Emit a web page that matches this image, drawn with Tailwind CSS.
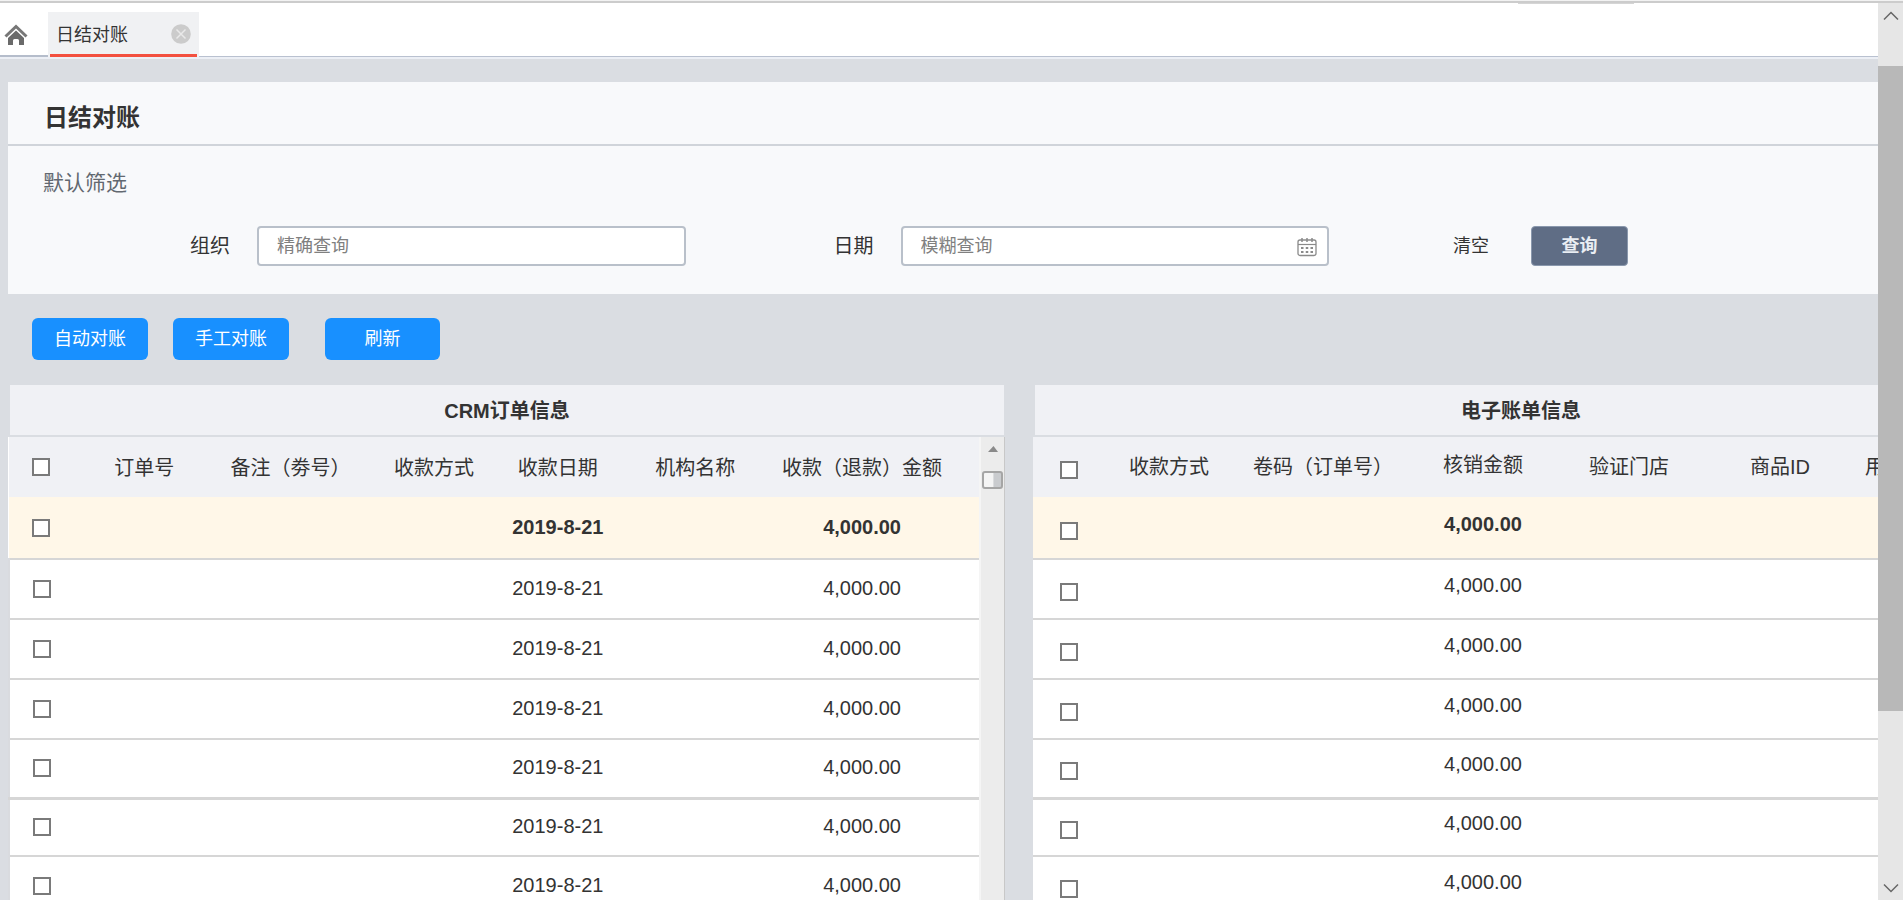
<!DOCTYPE html>
<html lang="zh-CN">
<head>
<meta charset="utf-8">
<title>日结对账</title>
<script src="https://cdn.jsdelivr.net/npm/@tailwindcss/browser@4"></script>
</head>
<body class="flex h-screen flex-col overflow-hidden bg-[#dadde2] font-['Liberation_Sans','Noto_Sans_CJK_SC',sans-serif] text-[#333]">
<div class="relative h-[3px] shrink-0 border-b-2 border-[#cccccc] bg-[#f2f2f2]">
  <span class="absolute top-[3px] left-[1518px] h-px w-[116px] bg-[#d5d5d5]"></span>
</div>
<div class="flex min-h-0 flex-1">
  <main class="min-w-0 flex-1 overflow-hidden">
    <nav class="flex h-14 items-end border-b-2 border-[#eceff5] bg-white">
      <div class="flex h-full w-12 items-center border-b-2 border-[#b5bdcb] pt-3 pl-1">
        <a href="#" aria-label="首页">
          <svg class="h-6 w-6" viewBox="0 0 24 24" fill="none"><path d="M1.500 13.500 12 3.500l10.500 10" stroke="#777" stroke-width="3"/><path d="M4 15 12 7.500l8 7.500v7h-5v-4.500q0-1.500-1.500-1.500h-3Q9 16 9 17.500V22H4z" fill="#6a6a6a"/></svg>
        </a>
      </div>
      <div class="flex h-[45px] w-[151px] items-center justify-between border-x-2 border-[#f0f1f3] bg-[#f0f1f3] pr-1 shadow-[inset_0_-3px_0_#f3503f]">
        <a href="#" class="pl-1.5 text-[18px] leading-6">日结对账</a>
        <button type="button" aria-label="关闭" class="mr-0.5 mb-0.5">
          <svg class="h-5 w-5" viewBox="0 0 20 20"><circle cx="10" cy="10" r="9.800" fill="#cbcbcb"/><path d="m5.500 5.500 9 9m0-9-9 9" stroke="#e9e9e9" stroke-width="1.500"/></svg>
        </button>
      </div>
      <div class="h-full flex-1 border-b border-[#b9c1d0]"></div>
    </nav>

    <section class="mt-[23px] ml-2 bg-[#f8f9fb]">
      <h1 class="border-b-2 border-[#d0d4da] pt-5 pb-[10px] pl-9 text-[24px] leading-8 font-bold">日结对账</h1>
      <h2 class="pt-[21px] pl-[35px] text-[21px] leading-8 text-[#626870]">默认筛选</h2>
      <form class="flex items-center pt-[27px] pr-[250px] pb-7 pl-[182px]">
        <label for="org" class="mr-[27px] text-[20px] leading-6">组织</label>
        <div class="min-w-0 flex-1">
          <input id="org" type="text" placeholder="精确查询" class="block h-10 w-full rounded border-2 border-[#b9c0ca] bg-white px-[18px] text-[18px] leading-6 placeholder:text-[#808080]">
        </div>
        <label for="date" class="mr-[27px] ml-[148px] text-[20px] leading-6">日期</label>
        <div class="relative min-w-0 flex-1">
          <input id="date" type="text" placeholder="模糊查询" class="block h-10 w-full rounded border-2 border-[#b9c0ca] bg-white px-[18px] text-[18px] leading-6 placeholder:text-[#808080]">
          <svg class="absolute top-[11px] right-3 h-5 w-5" viewBox="0 0 20 20" fill="none" stroke="#8a8a8a"><rect x="1" y="3" width="18" height="15.500" rx="2" stroke-width="1.300"/><path d="M1 7.500h18" stroke-width="1.200"/><path d="M5 1v4M10 1v4M15 1v4" stroke-width="1.500"/><path d="M4 11h12M4 15h12" stroke-width="2" stroke-dasharray="2.500 2.250"/></svg>
        </div>
        <button type="reset" class="ml-[124px] text-[18px] leading-6">清空</button>
        <button type="submit" class="ml-[42px] h-10 w-[97px] rounded border border-[#8a98ad] bg-[#5f6d85] text-[18px] leading-6 font-bold text-[#e9edf3]">查询</button>
      </form>
    </section>

    <div class="flex pt-6 pb-[25px] pl-8 text-[18px] leading-6 text-white">
      <button type="button" class="h-[42px] w-[116px] rounded-md bg-[#1890ff]">自动对账</button>
      <button type="button" class="ml-[25px] h-[42px] w-[116px] rounded-md bg-[#1890ff]">手工对账</button>
      <button type="button" class="ml-9 h-[42px] w-[115px] rounded-md bg-[#1890ff]">刷新</button>
    </div>

    <div class="flex pl-2 text-[20px] leading-6">
      <section class="w-[997px] shrink">
        <h3 class="mr-px ml-0.5 h-[50px] bg-[#f0f1f5] pt-[14px] text-center font-bold">CRM订单信息</h3>
        <div class="flex pt-0.5">
          <table class="min-w-0 flex-1 table-fixed border-collapse bg-white text-center whitespace-nowrap">
            <colgroup><col class="w-[65px]"><col class="w-[141px]"><col class="w-[152px]"><col class="w-[135px]"><col class="w-[113px]"><col class="w-[162px]"><col class="w-[172px]"><col class="w-[31px]"></colgroup>
            <thead>
              <tr class="h-[60px] bg-[#f0f1f5]">
                <th class="p-0 font-normal"><input type="checkbox" aria-label="全选订单" class="block mx-auto size-[18px] appearance-none border-2 border-[#7a7a7a] bg-white"></th>
                <th class="p-0 pt-0.5 font-normal">订单号</th><th class="p-0 pt-0.5 font-normal">备注（劵号）</th><th class="p-0 pt-0.5 font-normal">收款方式</th><th class="p-0 pt-0.5 font-normal">收款日期</th><th class="p-0 pt-0.5 font-normal">机构名称</th><th class="p-0 pt-0.5 font-normal">收款（退款）金额</th><td></td>
              </tr>
            </thead>
            <tbody id="orders"></tbody>
          </table>
          <div class="flex w-[26px] flex-col items-center border-r border-l-2 border-r-[#c8c8c8] border-l-[#f5f5f5] bg-[#ececec] pt-2">
            <svg class="h-2 w-3" viewBox="0 0 12 8"><path d="M1 7 6.500 1 11 7z" fill="#8a8a8a"/></svg>
            <div class="mt-[18px] h-[18px] w-[21px] rounded-[3px] border-2 border-[#a5a5a5] bg-linear-to-r from-[#f4f4f4] from-50% to-[#c9cbce] to-60%"></div>
          </div>
        </div>
      </section>

      <section class="ml-7 min-w-0 flex-1 overflow-hidden">
        <h3 class="ml-0.5 h-[50px] w-[972px] bg-[#f0f1f5] pt-[14px] text-center font-bold">电子账单信息</h3>
        <div class="pt-0.5">
          <table class="w-[974px] table-fixed border-collapse bg-white text-center whitespace-nowrap">
            <colgroup><col class="w-[72px]"><col class="w-[128px]"><col class="w-[180px]"><col class="w-[140px]"><col class="w-[152px]"><col class="w-[150px]"><col class="w-[152px]"></colgroup>
            <thead>
              <tr class="h-[60px] bg-[#f0f1f5]">
                <th class="p-0 pt-1.5 font-normal"><input type="checkbox" aria-label="全选账单" class="block mx-auto size-[18px] appearance-none border-2 border-[#7a7a7a] bg-white"></th>
                <th class="p-0 font-normal">收款方式</th><th class="p-0 font-normal">卷码（订单号）</th><th class="p-0 pb-1 font-normal">核销金额</th><th class="p-0 font-normal">验证门店</th><th class="p-0 font-normal">商品ID</th><th class="p-0 pl-[10px] text-left font-normal">用</th>
              </tr>
            </thead>
            <tbody id="bills"></tbody>
          </table>
        </div>
      </section>
    </div>
  </main>

  <aside class="flex w-[25px] shrink-0 flex-col items-center bg-[#e6e6e6]">
    <svg class="mt-2 h-[10px] w-4 shrink-0" viewBox="0 0 16 10" fill="none" stroke="#666" stroke-width="1.500"><path d="m1 8.500 7-7 7 7"/></svg>
    <div class="mt-[45px] w-full grow-[646] bg-[#b8b8b8]"></div>
    <div class="grow-[172]"></div>
    <svg class="mb-[7px] h-[10px] w-4 shrink-0" viewBox="0 0 16 10" fill="none" stroke="#666" stroke-width="1.500"><path d="m1 1.500 7 7 7-7"/></svg>
  </aside>
</div>
<script>
const rows = ["h-[62px] bg-[#fff7e8] font-bold border-b-2", "h-[60px] border-b-2", "h-[60px] border-b-2", "h-[60px] border-b-2", "h-[59px] border-b-3", "h-[58px] border-b-2", "h-[60px] border-b-2"];
const box = '<input type="checkbox" aria-label="选择此行" class="block mx-auto size-[18px] appearance-none border-2 border-[#7a7a7a] bg-white">';
document.getElementById("orders").innerHTML = rows.map((c, i) =>
  `<tr class="${c} border-[#d6d6d6]"><td class="p-0 ${i ? "border-l-2 border-l-[#d9dbdf]" : ""}">${box}</td><td></td><td></td><td></td><td class="p-0 pb-0.5">2019-8-21</td><td></td><td class="p-0 pb-0.5">4,000.00</td><td></td></tr>`).join("");
document.getElementById("bills").innerHTML = rows.map(c =>
  `<tr class="${c} border-[#d6d6d6]"><td class="p-0 pt-1.5">${box}</td><td></td><td></td><td class="p-0 pb-2">4,000.00</td><td></td><td></td><td></td></tr>`).join("");
</script>
</body>
</html>
